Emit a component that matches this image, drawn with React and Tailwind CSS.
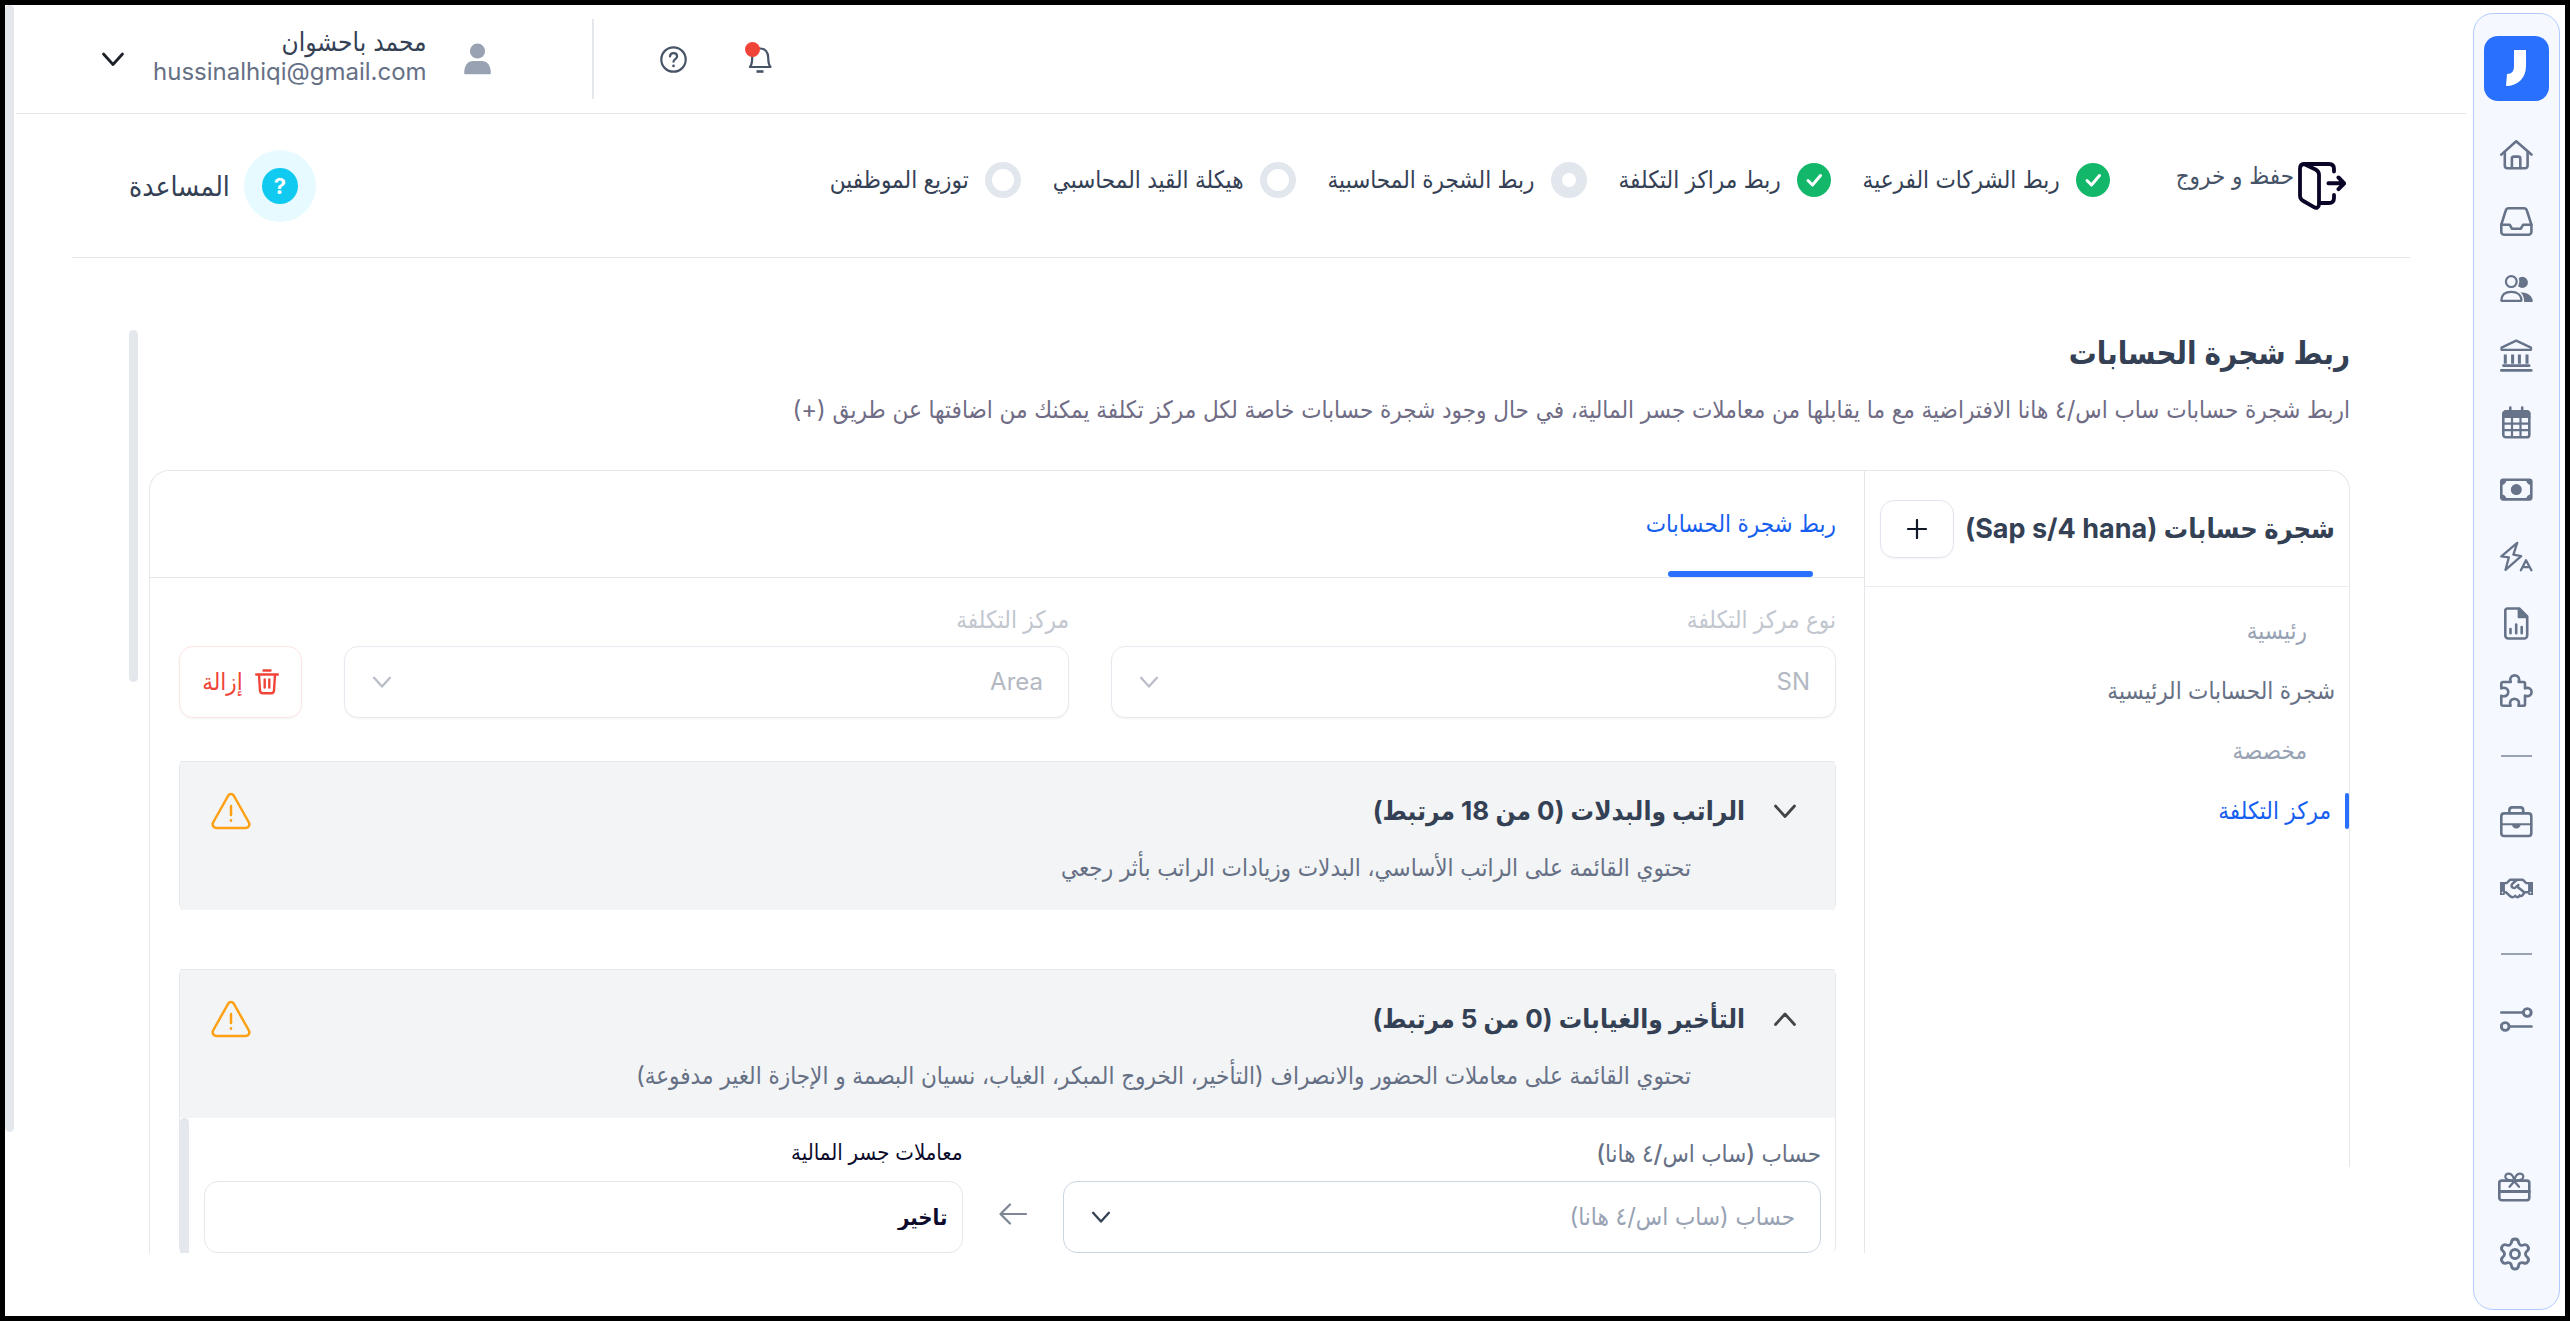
import { useState } from 'react';
import { FaRegHandshake } from 'react-icons/fa';
import { Settings } from 'lucide-react';

function Icon({ children }) {
    return (
        <svg viewBox="0 0 33 33" className="size-[33px]" fill="none" stroke="currentColor" strokeWidth="2.6" strokeLinecap="round" strokeLinejoin="round" aria-hidden="true">
            {children}
        </svg>
    );
}

const HomeIcon = () => (
    <Icon>
        <path d="M1.3 16.6 16.2 3.3 31.4 16.6" />
        <path d="M4.8 14v13.4a2.8 2.8 0 0 0 2.8 2.8h17.2a2.8 2.8 0 0 0 2.8-2.8V14" />
        <path d="M11.9 30V20.6a2 2 0 0 1 2-2h4.4a2 2 0 0 1 2 2V30" />
    </Icon>
);

const InboxIcon = () => (
    <Icon>
        <path d="M8.8 3.3h15c1.5 0 2.7.9 3.1 2.4l4.5 14v7.1a3 3 0 0 1-3 3H4.3a3 3 0 0 1-3-3v-7.1l4.4-14c.4-1.5 1.6-2.4 3.1-2.4z" />
        <path d="M1.4 19.8h8.4l2.3 4h8.6l2.3-4h8.3" />
    </Icon>
);

const UsersIcon = () => (
    <Icon>
        <circle cx="22.3" cy="10.4" r="5.6" fill="currentColor" stroke="none" />
        <path d="M19.5 20.6c7.6-1.2 12.6 3 13.3 8.2.1.8-.4 1.2-1.2 1.2H19.5z" fill="currentColor" stroke="none" />
        <circle cx="11.3" cy="9.6" r="8" fill="#f5f8ff" stroke="none" />
        <path d="M11.3 17.5c9 0 12.9 5 12.9 12.8H11z" fill="#f5f8ff" stroke="none" />
        <circle cx="11.3" cy="9.6" r="5.4" strokeWidth="2.2" />
        <path d="M1.3 28.2c.3-5.2 4-8.3 10-8.3s9.9 3.1 10.2 8.3c0 .4-.2.6-.6.6H1.9c-.4 0-.6-.2-.6-.6z" strokeWidth="2.2" />
    </Icon>
);

const BankIcon = () => (
    <Icon>
        <path d="M16.2 1.6 31 8.6v2.2H1.5V8.6z" strokeWidth="2.3" />
        <path d="M5.3 15.4v9.4M12.6 15.4v9.4M19.4 15.4v9.4M27 15.4v9.4" strokeLinecap="butt" strokeWidth="3" />
        <path d="M3.4 26.6h25.8" />
        <path d="M1.3 31.4h30" />
    </Icon>
);

const CalendarIcon = () => (
    <Icon>
        <path d="M4.4 4.5h24v7h-24z" fill="currentColor" stroke="none" />
        <rect x="3.3" y="5.3" width="26" height="26" rx="2.6" />
        <path d="M10.3 1.6v4M22.2 1.6v4" />
        <path d="M3.5 7.6h25.6M3.5 10.4h25.6" strokeWidth="3" />
        <path d="M3.5 17.6h25.6M3.5 24.2h25.6M12 11v20M20.5 11v20" strokeWidth="2.2" />
    </Icon>
);

const MoneyIcon = () => (
    <Icon>
        <rect x="1.3" y="6.8" width="30" height="19.6" rx="1.8" />
        <circle cx="16.3" cy="16.6" r="5.5" fill="currentColor" stroke="none" />
        <path d="M1.3 6.8h5.2a5.2 5.2 0 0 1-5.2 5.2zM31.3 6.8V12a5.2 5.2 0 0 1-5.2-5.2zM1.3 26.4v-5.2a5.2 5.2 0 0 1 5.2 5.2zM31.3 26.4h-5.2a5.2 5.2 0 0 1 5.2-5.2z" fill="currentColor" stroke="none" />
    </Icon>
);

const AutomationIcon = () => (
    <Icon>
        <path d="M17.2 2.8 1.3 16.4l7.6.9-3.4 12.5 15.7-13.6-7.8-1.5z" strokeWidth="2.3" />
        <path d="m20.9 30.2 5.1-10 5.4 10M22.7 27.2h7" strokeWidth="2.3" />
    </Icon>
);

const ReportIcon = () => (
    <Icon>
        <path d="M7.4 1.5h11.8l8 8v19a3 3 0 0 1-3 3H8.3a3 3 0 0 1-3-3V3.6c0-1.2.9-2.1 2.1-2.1z" />
        <path d="M18.4 1.5v9h8.8z" fill="currentColor" strokeWidth="1.5" />
        <path d="M10.5 22v4.2M16.2 17.6v8.6M21.7 20v6.2" />
    </Icon>
);

const PuzzleIcon = () => (
    <Icon>
        <path d="M3 8h7.8c-1.6-3.6.4-6.6 3.9-6.6s5.5 3 3.9 6.6h4.9c.9 0 1.5.6 1.5 1.5v4.9c3.4-1.5 6.6.2 6.6 3.6s-3.2 5.1-6.6 3.6v8.6c0 .9-.6 1.5-1.5 1.5h-5.1c1.6-4-.4-6.8-3.9-6.8s-5.5 2.800-3.9 6.8H3c-1 0-1.700-.6-1.700-1.500v-8.500c3.800 1.600 7-.2 7-3.700s-3.200-5.200-7-3.700V9.600C1.300 8.600 2 8 3 8z" />
    </Icon>
);

const BriefcaseIcon = () => (
    <Icon>
        <rect x="1.3" y="8.4" width="30" height="22.6" rx="2.8" />
        <path d="M9.4 8V5.2a2.8 2.8 0 0 1 2.8-2.8h8.2a2.8 2.8 0 0 1 2.8 2.8V8" />
        <path d="M1.3 19.2h30" strokeWidth="2" />
        <path d="M12 19.2h8.6c0 2.6-1.7 4.2-4.3 4.2S12 21.8 12 19.2z" fill="currentColor" stroke="none" />
    </Icon>
);

const SlidersIcon = () => (
    <Icon>
        <path d="M1.2 9.5h22M10 23.5h21.5" />
        <circle cx="27.3" cy="9.5" r="3.9" strokeWidth="2.9" />
        <circle cx="5.2" cy="23.5" r="3.9" strokeWidth="2.9" />
    </Icon>
);

const GiftIcon = () => (
    <Icon>
        <rect x="1.3" y="10.6" width="30" height="19.6" rx="2.4" />
        <path d="M1.3 21.6h30" strokeWidth="3" />
        <path d="M16.3 10.6c-2.8 0-8.8.2-9-3.8-.1-2 1.6-3.2 3.5-3.1 3.2.2 4.8 3.6 5.5 6.9.7-3.3 2.3-6.7 5.5-6.9 1.9-.1 3.6 1.1 3.5 3.1-.2 4-6.2 3.8-9 3.8z" strokeWidth="2.2" />
        <path d="m11.6 16.800 4.700-5.600 4.700 5.600" strokeWidth="2.3" />
    </Icon>
);

const MENU = [
    { label: 'home', icon: <HomeIcon /> },
    { label: 'inbox', icon: <InboxIcon /> },
    { label: 'employees', icon: <UsersIcon /> },
    { label: 'bank', icon: <BankIcon /> },
    { label: 'calendar', icon: <CalendarIcon /> },
    { label: 'payments', icon: <MoneyIcon /> },
    { label: 'automation', icon: <AutomationIcon /> },
    { label: 'reports', icon: <ReportIcon /> },
    { label: 'apps', icon: <PuzzleIcon /> },
    null,
    { label: 'jobs', icon: <BriefcaseIcon /> },
    { label: 'partners', icon: <FaRegHandshake className="size-[33px]" /> },
    null,
    { label: 'preferences', icon: <SlidersIcon /> },
];

const STEPS = [
    { label: 'ربط الشركات الفرعية', state: 'done' },
    { label: 'ربط مراكز التكلفة', state: 'done' },
    { label: 'ربط الشجرة المحاسبية', state: 'current' },
    { label: 'هيكلة القيد المحاسبي', state: 'next' },
    { label: 'توزيع الموظفين', state: 'next' },
];

function Chevron({ className, up }) {
    return (
        <svg viewBox="0 0 24 24" className={className} fill="none" stroke="currentColor" strokeWidth="2.8" strokeLinecap="round" strokeLinejoin="round" aria-hidden="true">
            <path d={up ? 'M2.5 17.5 12 7l9.5 10.5' : 'M2.5 7 12 17.5 21.5 7'} />
        </svg>
    );
}

function Sidebar() {
    return (
        <nav className="mt-2 mr-[5px] mb-1.5 flex w-[87px] shrink-0 flex-col items-center rounded-[20px] border border-[#b2ccff] bg-[#f5f8ff] py-[22px] text-[#667389]">
            <a href="#" aria-label="jisr" className="mb-5 flex size-[65px] items-center justify-center rounded-[14px] bg-[#2970ff]">
                <svg viewBox="0 0 65 65" className="size-full" fill="#fff" aria-hidden="true">
                    <path d="M30 14h12v16c0 12-8 20-20 20l1-12c5 0 7-3 7-8z" />
                </svg>
            </a>
            {MENU.map((item, i) =>
                item ? (
                    <a key={i} href="#" aria-label={item.label} className="flex h-[67px] w-full items-center justify-center">
                        {item.icon}
                    </a>
                ) : (
                    <div key={i} className="flex h-16 items-center">
                        <div className="h-[2px] w-[31px] bg-[#98a2b3]" />
                    </div>
                )
            )}
            <a href="#" aria-label="gifts" className="mt-auto flex h-[67px] w-full items-center justify-center pr-1">
                <GiftIcon />
            </a>
            <a href="#" aria-label="settings" className="flex h-[67px] w-full items-center justify-center pr-1">
                <Settings className="size-9" strokeWidth={1.9} />
            </a>
        </nav>
    );
}

function Header() {
    return (
        <header className="flex h-[109px] shrink-0 items-center justify-end border-b border-[#e4e7ec] pl-[85px]">
            <button type="button" aria-label="notifications" className="relative ml-[60px] text-[#475467]">
                <svg viewBox="0 0 26 32" className="h-8 w-[26px]" fill="none" stroke="currentColor" strokeWidth="2.2" strokeLinejoin="round">
                    <path d="M3 24h20.5c-2-2.5-2.3-4.5-2.3-9.5 0-5-2.8-9-8-9s-8 4-8 9c0 5-.3 7-2.2 9.5z" />
                    <path d="M9.5 28.500h7" strokeWidth="2.6" />
                </svg>
                <span className="absolute -top-px -left-0.5 size-[15px] rounded-full bg-[#f04438]" />
            </button>
            <button type="button" aria-label="help" className="ml-[66px] text-[#475467]">
                <svg viewBox="0 0 27 27" className="size-[27px]" fill="none" stroke="currentColor" strokeWidth="2.2" strokeLinecap="round">
                    <circle cx="13.5" cy="13.5" r="12.2" />
                    <path d="M10 10.5c.2-2.2 1.5-3.3 3.5-3.3s3.6 1.2 3.6 3.2c0 2.6-3.6 2.7-3.6 5.3" />
                    <path d="M13.5 19.700v.2" strokeWidth="2.6" />
                </svg>
            </button>
            <div className="ml-[101px] h-20 w-[2px] bg-[#e4e7ec]" />
            <svg viewBox="0 0 27 32" className="ml-[37px] h-8 w-[27px]" fill="#98a2b3" aria-hidden="true">
                <circle cx="13.5" cy="8" r="7.6" />
                <path d="M.2 30c0-7.500 3.300-12 9.300-12h8c6 0 9.300 4.500 9.300 12 0 .8-.3 1.200-1.200 1.200H1.400C.5 31.200.2 30.800.2 30z" />
            </svg>
            <div className="ml-[28px] pb-1 leading-[30px]">
                <div className="text-[26px] font-medium text-[#344054]">محمد باحشوان</div>
                <div className="text-[#667085]">hussinalhiqi@gmail.com</div>
            </div>
            <button type="button" aria-label="account" className="text-[#1d2129]">
                <Chevron className="size-6" />
            </button>
        </header>
    );
}

function StepMark({ state }) {
    if (state === 'done') {
        return (
            <span className="flex size-[34px] items-center justify-center rounded-full bg-[#12b76a]">
                <svg viewBox="0 0 34 34" className="size-full" fill="none" stroke="#fff" strokeWidth="3" strokeLinecap="round" strokeLinejoin="round">
                    <path d="m11 17.500 4.500 4.500 8-9.500" />
                </svg>
            </span>
        );
    }
    return (
        <span className="flex size-9 items-center justify-center rounded-full bg-[#e2e7ee]">
            <span className={state === 'current' ? 'size-3.5 rounded-full bg-white' : 'size-[22px] rounded-full bg-white'} />
        </span>
    );
}

function Stepper() {
    return (
        <div className="mx-14 flex h-36 shrink-0 items-center border-b border-[#e4e7ec] pr-16 pl-[57px]">
            <button type="button" className="flex items-center gap-1 text-[#475467]">
                <svg viewBox="0 0 48 48" className="size-12" fill="none" stroke="#0a0426" strokeWidth="3.8" strokeLinecap="round" strokeLinejoin="round" aria-hidden="true">
                    <path d="M6 2 17.500 7.500c2.300 1.200 3.500 2.800 3.500 5.200v29.800c0 3-2.600 4.200-5 2.700L4.500 38.500C2.700 37.300 2 36 2 33.800V6.500C2 3.500 3.300 2 6 2z" />
                    <path d="M6 2h25c3.200 0 5 1.800 5 5v2.500M36 33v3c0 3.200-1.800 5-5 5h-9" />
                    <path d="M30.500 21.300h15M40.500 15.500l5.700 5.800-5.700 5.800" strokeWidth="4" />
                </svg>
                <span className="pb-5">حفظ و خروج</span>
            </button>
            <ol className="mr-[66px] flex items-center gap-8 pb-3 font-medium text-[#344054]">
                {STEPS.map((step) => (
                    <li key={step.label} className="flex items-center gap-4">
                        <StepMark state={step.state} />
                        {step.label}
                    </li>
                ))}
            </ol>
            <button type="button" className="mr-auto flex items-center gap-3.5 text-[28px] text-[#344054]">
                <span className="flex size-[72px] items-center justify-center rounded-full bg-[#e6faff]">
                    <span className="flex size-9 items-center justify-center rounded-full bg-[#11caf0] text-[22px] font-bold text-white">?</span>
                </span>
                المساعدة
            </button>
        </div>
    );
}

function TreePanel() {
    return (
        <aside className="w-[485px] shrink-0 rounded-tr-[20px] border-t border-r border-[#e4e7ec] pb-[326px]">
            <div className="flex h-[116px] items-center justify-between border-b border-[#eaecf0] pr-[14px] pl-[15px]">
                <h2 className="text-[27px] font-bold text-[#344054]">شجرة حسابات (Sap s/4 hana)</h2>
                <button type="button" aria-label="add" className="flex h-[58px] w-[74px] items-center justify-center rounded-[14px] border border-[#e0e5ef] text-[#101828] shadow-xs">
                    <svg viewBox="0 0 20 20" className="size-5" stroke="currentColor" strokeWidth="2.2" strokeLinecap="round">
                        <path d="M10 1v18M1 10h18" />
                    </svg>
                </button>
            </div>
            <ul className="flex flex-col pt-[14px] leading-[60px] text-[#98a2b3]">
                <li className="pr-[42px]">رئيسية</li>
                <li className="pr-[14px]">
                    <a href="#" className="font-medium text-[#667085]">شجرة الحسابات الرئيسية</a>
                </li>
                <li className="pr-[42px]">مخصصة</li>
                <li>
                    <a href="#" className="flex items-center gap-[14px] font-medium text-[#155eef]">
                        <span className="h-9 w-1 rounded-xs bg-[#2970ff]" />
                        مركز التكلفة
                    </a>
                </li>
            </ul>
        </aside>
    );
}

function DisabledSelect({ id, label, value }) {
    return (
        <div className="flex min-w-0 flex-1 flex-col gap-2">
            <label htmlFor={id} className="font-medium text-[#c1c6cf]">{label}</label>
            <div className="relative">
                <select id={id} disabled className="h-[72px] w-full appearance-none rounded-[14px] border border-[#e7eaf0] bg-white px-[25px] text-[#b3b8c2] opacity-100 shadow-xs">
                    <option>{value}</option>
                </select>
                <Chevron className="absolute top-[26px] left-7 size-5 text-[#b9bec7]" />
            </div>
        </div>
    );
}

function Accordion({ title, text, open, onToggle, children }) {
    return (
        <section className="rounded-md border-x border-[#e4e7ec]">
            <div className="rounded-xs border-t border-[#e4e7ec] bg-[#f2f4f6] pt-7 pb-6 pl-[31px]">
                <div className="flex items-center">
                    <button type="button" onClick={onToggle} aria-expanded={open} className="flex items-center gap-7 pr-[38px] text-[26px] leading-[42px] font-bold text-[#344054]">
                        <Chevron up={open} className="size-6 text-[#444]" />
                        {title}
                    </button>
                    <svg viewBox="0 0 40 38" className="mr-auto h-[38px] w-10" fill="none" stroke="#fda014" strokeWidth="2.5" strokeLinecap="round" strokeLinejoin="round" aria-hidden="true">
                        <path d="M17.3 3.5c1.2-2 4.2-2 5.400 0l15.200 27c1.300 2.500-.3 5.500-3 5.500H5.100c-2.700 0-4.300-3-3-5.500z" />
                        <path d="M20 14v9M20 28.300v.4" />
                    </svg>
                </div>
                <p className="mt-[18px] pr-[144px] text-[#667085]">{text}</p>
            </div>
            {open && children}
        </section>
    );
}

function MappingRow() {
    return (
        <div className="flex">
            <div className="flex flex-1 items-end pt-[18px] pr-[14px] pl-[15px]">
                <div className="flex flex-1 flex-col gap-[9px]">
                    <label htmlFor="account" className="font-medium text-[#667085]">حساب (ساب اس/٤ هانا)</label>
                    <div className="relative">
                        <select id="account" className="h-[72px] w-full appearance-none rounded-[14px] border border-[#cbd5e1] bg-white px-[25px] text-[#98a2b3]">
                            <option>حساب (ساب اس/٤ هانا)</option>
                        </select>
                        <Chevron className="absolute top-[26px] left-7 size-5 text-[#344054]" />
                    </div>
                </div>
                <svg viewBox="0 0 28 24" className="mx-9 mb-[27px] h-6 w-7" fill="none" stroke="#7d8794" strokeWidth="2.2" strokeLinecap="round" strokeLinejoin="round" aria-hidden="true">
                    <path d="M27 12H1.500M11 2.500 1.500 12l9.500 9.500" />
                </svg>
                <div className="flex flex-1 flex-col gap-[9px]">
                    <label htmlFor="transaction" className="pb-1 text-[22px] leading-8 font-medium text-[#0d0b2b]">معاملات جسر المالية</label>
                    <input id="transaction" readOnly value="تاخير" className="h-[72px] w-full rounded-[14px] border border-[#e4e7ec] bg-white px-[14px] text-[22px] font-bold text-[#0d0b2b]" />
                </div>
            </div>
            <div className="w-[9px] rounded-t-full bg-[#e4e7ec]" />
        </div>
    );
}

export default function App() {
    const [open, setOpen] = useState({ salary: false, absence: true });
    const toggle = (key) => setOpen({ ...open, [key]: !open[key] });

    return (
        <div dir="rtl" className="flex h-screen overflow-hidden border-[5px] border-black bg-white font-['Inter','DejaVu_Sans_Condensed','DejaVu_Sans',sans-serif] text-2xl leading-9">
            <Sidebar />

            <div className="mr-[7px] ml-[2px] flex min-w-0 flex-1 flex-col">
                <Header />
                <Stepper />

                <div className="mt-[72px] mr-[116px] mb-[62px] ml-[113px] flex min-h-0 flex-1 overflow-hidden">
                    <main className="min-w-0 flex-1">
                        <h1 className="text-[31px] leading-[46px] font-semibold text-[#344054]">ربط شجرة الحسابات</h1>
                        <p className="mt-4 text-[#6f6c85]">
                            اربط شجرة حسابات ساب اس/٤ هانا الافتراضية مع ما يقابلها من معاملات جسر المالية، في حال وجود شجرة حسابات خاصة لكل مركز تكلفة يمكنك من اضافتها عن طريق (+)
                        </p>

                        <div className="mt-[42px] flex items-start">
                            <TreePanel />

                            <div className="min-w-0 flex-1 rounded-tl-[20px] border-x border-t border-[#e4e7ec]">
                                <div role="tablist" className="flex h-[107px] border-b border-[#e4e7ec] pr-7">
                                    <button type="button" role="tab" aria-selected="true" className="relative flex items-center justify-center font-medium text-[#155eef]">
                                        ربط شجرة الحسابات
                                        <span className="absolute bottom-0 h-1.5 w-[145px] rounded-sm bg-[#2970ff]" />
                                    </button>
                                </div>

                                <div className="pt-6 pr-7 pl-[29px]">
                                    <div className="flex items-end gap-[42px]">
                                        <DisabledSelect id="cost-type" label="نوع مركز التكلفة" value="SN" />
                                        <DisabledSelect id="cost-center" label="مركز التكلفة" value="Area" />
                                        <button type="button" className="flex h-[72px] w-[123px] items-center justify-center gap-3 rounded-[14px] border border-[#fee4e2] font-medium text-[#f04438] shadow-xs">
                                            <svg viewBox="0 0 24 26" className="h-[26px] w-6" fill="none" stroke="currentColor" strokeWidth="2.4" strokeLinecap="round" strokeLinejoin="round" aria-hidden="true">
                                                <path d="M1.200 5.500h21.600M8.500 1.500h7M4 6l1 15.500c.1 1.800 1.200 2.800 3 2.800h8c1.800 0 2.900-1 3-2.800L20 6M9.700 10.500v8M14.300 10.500v8" />
                                            </svg>
                                            إزالة
                                        </button>
                                    </div>

                                    <div className="mt-[43px] flex flex-col gap-[59px]">
                                        <Accordion
                                            title="الراتب والبدلات (0 من 18 مرتبط)"
                                            text="تحتوي القائمة على الراتب الأساسي، البدلات وزيادات الراتب بأثر رجعي"
                                            open={open.salary}
                                            onToggle={() => toggle('salary')}
                                        />
                                        <Accordion
                                            title="التأخير والغيابات (0 من 5 مرتبط)"
                                            text="تحتوي القائمة على معاملات الحضور والانصراف (التأخير، الخروج المبكر، الغياب، نسيان البصمة و الإجازة الغير مدفوعة)"
                                            open={open.absence}
                                            onToggle={() => toggle('absence')}
                                        >
                                            <MappingRow />
                                        </Accordion>
                                    </div>
                                </div>
                            </div>
                        </div>
                    </main>

                    <div className="mr-[11px] h-[352px] w-[9px] rounded-full bg-[#e4e7ec]" />
                </div>
            </div>

            <div className="h-[86%] w-[9px] rounded-full bg-[#e4e7ec]" />
        </div>
    );
}
